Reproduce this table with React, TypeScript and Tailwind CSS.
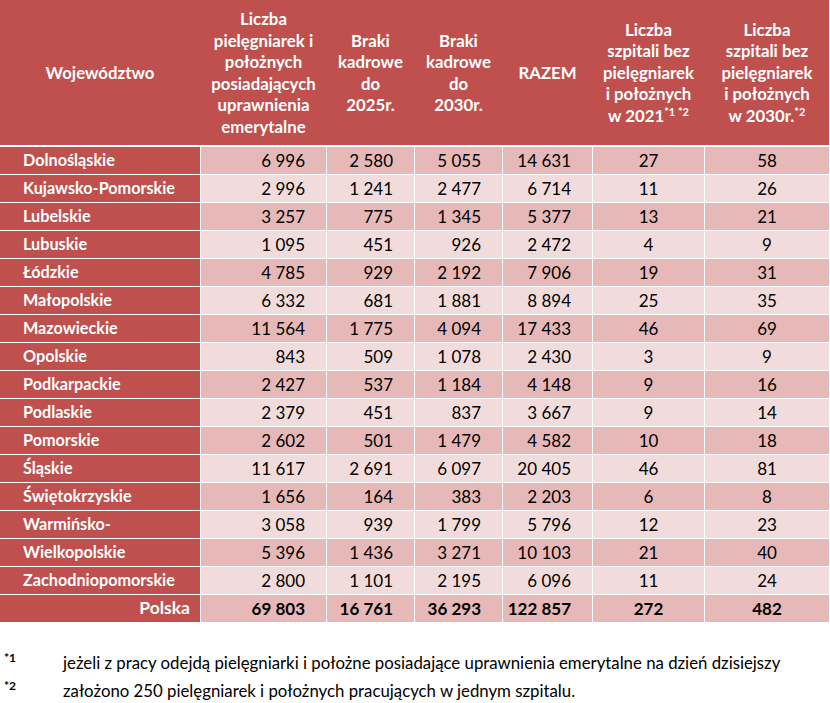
import React from "react";

const rows: [string, string, string, string, string, string, string][] = [
  ["Dolnośląskie", "6 996", "2 580", "5 055", "14 631", "27", "58"],
  ["Kujawsko-Pomorskie", "2 996", "1 241", "2 477", "6 714", "11", "26"],
  ["Lubelskie", "3 257", "775", "1 345", "5 377", "13", "21"],
  ["Lubuskie", "1 095", "451", "926", "2 472", "4", "9"],
  ["Łódzkie", "4 785", "929", "2 192", "7 906", "19", "31"],
  ["Małopolskie", "6 332", "681", "1 881", "8 894", "25", "35"],
  ["Mazowieckie", "11 564", "1 775", "4 094", "17 433", "46", "69"],
  ["Opolskie", "843", "509", "1 078", "2 430", "3", "9"],
  ["Podkarpackie", "2 427", "537", "1 184", "4 148", "9", "16"],
  ["Podlaskie", "2 379", "451", "837", "3 667", "9", "14"],
  ["Pomorskie", "2 602", "501", "1 479", "4 582", "10", "18"],
  ["Śląskie", "11 617", "2 691", "6 097", "20 405", "46", "81"],
  ["Świętokrzyskie", "1 656", "164", "383", "2 203", "6", "8"],
  ["Warmińsko-", "3 058", "939", "1 799", "5 796", "12", "23"],
  ["Wielkopolskie", "5 396", "1 436", "3 271", "10 103", "21", "40"],
  ["Zachodniopomorskie", "2 800", "1 101", "2 195", "6 096", "11", "24"],
];

const total = ["Polska", "69 803", "16 761", "36 293", "122 857", "272", "482"];

const cols = "grid grid-cols-[200px_125px_87px_87px_89px_111px_124px] gap-x-[1px]";

function HeadCell({ children }: { children: React.ReactNode }) {
  return (
    <div className="flex items-center justify-center text-center px-1 text-white font-bold text-[16.8px] leading-[21.5px]">
      <div>{children}</div>
    </div>
  );
}

function Row({ r, dark, bold, isTotal }: { r: string[]; dark: boolean; bold?: boolean; isTotal?: boolean }) {
  const bg = dark ? "bg-[#e6b8b7]" : "bg-[#f2dcdb]";
  const w = bold ? "font-bold" : "font-normal";
  return (
    <div className={`${cols} h-[27px]`}>
      <div
        className={`bg-[#c0504d] text-white font-bold flex items-center ${
          isTotal ? "justify-end pr-[10px] text-[17.5px]" : "pl-[23px] text-[16.2px]"
        }`}
      >
        {r[0]}
      </div>
      {[1, 2, 3, 4].map((i) => (
        <div key={i} className={`${bg} ${w} text-[17px] text-black flex items-center justify-end pr-[21px]`}>
          {r[i]}
        </div>
      ))}
      {[5, 6].map((i) => (
        <div key={i} className={`${bg} ${w} text-[17px] text-black flex items-center justify-center`}>
          {r[i]}
        </div>
      ))}
    </div>
  );
}

export default function App() {
  return (
    <div className="w-[830px] h-[703px] bg-white overflow-hidden" style={{ fontFamily: "Lato, 'Noto Sans', sans-serif" }}>
      <div className="w-[829px] flex flex-col bg-white">
        <div className={`${cols} h-[145px] bg-[#c0504d]`}>
          <HeadCell>Województwo</HeadCell>
          <HeadCell>
            Liczba
            <br />
            pielęgniarek i
            <br />
            położnych
            <br />
            posiadających
            <br />
            uprawnienia
            <br />
            emerytalne
          </HeadCell>
          <HeadCell>
            Braki
            <br />
            kadrowe
            <br />
            do
            <br />
            2025r.
          </HeadCell>
          <HeadCell>
            Braki
            <br />
            kadrowe
            <br />
            do
            <br />
            2030r.
          </HeadCell>
          <HeadCell>RAZEM</HeadCell>
          <HeadCell>
            Liczba
            <br />
            szpitali bez
            <br />
            pielęgniarek
            <br />
            i położnych
            <br />
            w 2021<sup className="text-[11px]">*1 *2</sup>
          </HeadCell>
          <HeadCell>
            Liczba
            <br />
            szpitali bez
            <br />
            pielęgniarek
            <br />
            i położnych
            <br />
            w 2030r.<sup className="text-[11px]">*2</sup>
          </HeadCell>
        </div>
        <div className="h-[2px]" />
        <div className="flex flex-col gap-y-[1px]">
          {rows.map((r, i) => (
            <Row key={r[0]} r={r} dark={i % 2 === 0} />
          ))}
          <Row r={total} dark bold isTotal />
        </div>
      </div>
      <div className="mt-[27px] flex flex-col text-[16.8px] text-black">
        <div className="flex h-[28px] items-center">
          <span className="w-[63px] pl-[4px] font-bold text-[12px] self-start">*1</span>
          <span>jeżeli z pracy odejdą pielęgniarki i położne posiadające uprawnienia emerytalne na dzień dzisiejszy</span>
        </div>
        <div className="flex h-[28px] items-center">
          <span className="w-[63px] pl-[4px] font-bold text-[12px] self-start">*2</span>
          <span>założono 250 pielęgniarek i położnych pracujących w jednym szpitalu.</span>
        </div>
      </div>
    </div>
  );
}
